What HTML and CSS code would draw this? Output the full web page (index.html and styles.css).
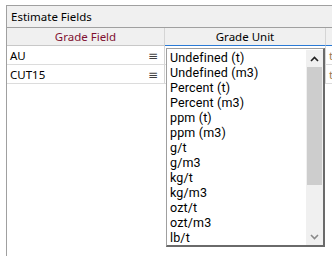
FILE: index.html
```html
<!DOCTYPE html>
<html>
<head>
<meta charset="utf-8">
<link rel="stylesheet" href="styles.css">
</head>
<body>
<div class="frame">
  <div class="title">Estimate Fields</div>
  <div class="grid">
    <div class="row hdr">
      <div class="c1 hcell field">Grade Field</div>
      <div class="c2 hcell unit">Grade Unit</div>
      <div class="c3 hcell"></div>
    </div>
    <div class="row">
      <div class="c1 cell"><span>AU</span><span class="menu">≡</span></div>
      <div class="c2 cell"></div>
      <div class="c3 cell extra">t</div>
    </div>
    <div class="row">
      <div class="c1 cell"><span>CUT15</span><span class="menu">≡</span></div>
      <div class="c2 cell"></div>
      <div class="c3 cell extra">t</div>
    </div>
  </div>
  <div class="dropdown">
    <ul class="list">
      <li>Undefined (t)</li>
      <li>Undefined (m3)</li>
      <li>Percent (t)</li>
      <li>Percent (m3)</li>
      <li>ppm (t)</li>
      <li>ppm (m3)</li>
      <li>g/t</li>
      <li>g/m3</li>
      <li>kg/t</li>
      <li>kg/m3</li>
      <li>ozt/t</li>
      <li>ozt/m3</li>
      <li>lb/t</li>
    </ul>
    <div class="scroll">
      <div class="arrow"><svg width="9" height="6" viewBox="0 0 9 6"><path d="M1 5 L4.5 1.5 L8 5" fill="none" stroke="#202020" stroke-width="1.6"/></svg></div>
      <div class="track"><div class="thumb"></div></div>
      <div class="arrow"><svg width="9" height="6" viewBox="0 0 9 6"><path d="M1 1 L4.5 4.5 L8 1" fill="none" stroke="#8a8a8a" stroke-width="1.6"/></svg></div>
    </div>
  </div>
</div>
</body>
</html>
```

FILE: styles.css
```css
html, body {
  margin: 0;
  padding: 0;
  background: #ffffff;
}
body {
  padding: 5px 0 0 6px;
  height: 256px;
  box-sizing: border-box;
  overflow: hidden;
  font-family: "Noto Sans", "DejaVu Sans", sans-serif;
  font-size: 11.5px;
  color: #000;
}
.frame {
  position: relative;
  border-left: 1px solid #a0a0a0;
  border-top: 1px solid #a0a0a0;
  height: 251px;
  box-sizing: border-box;
  width: 340px;
}
.title {
  height: 21px;
  background: #f0f0f0;
  border-bottom: 1px solid #a0a0a0;
  padding-left: 4px;
  display: flex;
  align-items: center;
}
.row {
  display: flex;
  height: 19px;
}
.hdr {
  height: 18px;
  background: #f0f0f0;
}
.c1 { width: 158px; }
.c2 { width: 161px; }
.c3 { flex: 1; }
.hcell {
  box-sizing: border-box;
  border-right: 1px solid #d5d5d5;
  border-bottom: 1px solid #c8c8c8;
  display: flex;
  align-items: center;
  justify-content: center;
}
.hdr .unit {
  border-bottom: 1px solid #2a7ad5;
}
.hdr .c3 {
  border-bottom: 1px solid #2a7ad5;
}
.field { color: #801030; }
.cell {
  box-sizing: border-box;
  border-right: 1px solid #d5d5d5;
  border-bottom: 1px solid #dcdcdc;
  display: flex;
  align-items: center;
  justify-content: space-between;
  padding: 1px 6px 0 3px;
}
.menu {
  color: #404040;
  font-size: 12px;
}
.extra {
  color: #a07a50;
}
.dropdown {
  position: absolute;
  left: 159px;
  top: 42px;
  width: 159px;
  height: 199px;
  box-sizing: border-box;
  background: #fff;
  border-top: 1px solid #a0a0a0;
  border-left: 1px solid #a0a0a0;
  border-right: 2px solid #6a6a6a;
  border-bottom: 2px solid #6a6a6a;
  display: flex;
}
.list {
  list-style: none;
  margin: 0;
  padding: 1px 0 0 3px;
  flex: 1;
  font-family: Roboto, "Noto Sans", sans-serif;
  font-size: 12.5px;
  letter-spacing: 0.15px;
}
.list li {
  height: 15px;
  line-height: 15px;
  white-space: nowrap;
}
.scroll {
  width: 17px;
  background: #f0f0f0;
  display: flex;
  flex-direction: column;
  margin: 1px 0 0 0;
}
.arrow {
  height: 17px;
  display: flex;
  align-items: center;
  justify-content: center;
}
.track {
  flex: 1;
  position: relative;
}
.thumb {
  margin: 0 1px;
  height: 118px;
  background: #cdcdcd;
}
```
